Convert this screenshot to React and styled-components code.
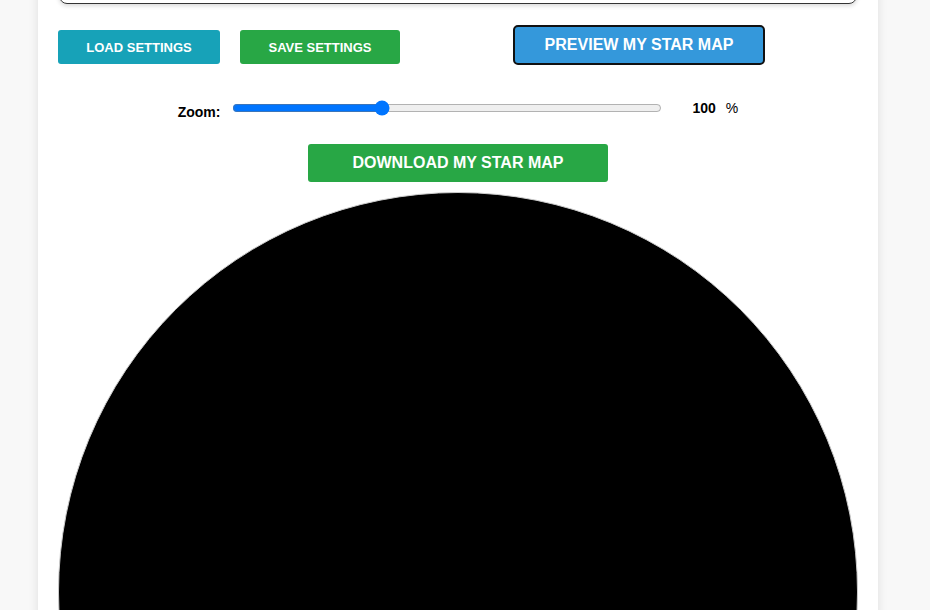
import React, { useState } from 'react';
import styled, { createGlobalStyle } from 'styled-components';

const GlobalStyle = createGlobalStyle`
  html, body {
    margin: 0;
    padding: 0;
    background: #f8f8f8;
    font-family: "Liberation Sans", Arial, sans-serif;
    overflow: hidden;
  }
`;

const Card = styled.div`
  width: 800px;
  margin-left: 38px;
  padding: 0 20px 40px;
  background: #fff;
  box-shadow: 0 0 10px rgba(0, 0, 0, 0.1);
`;

// bottom edge of the text box that sits above the fold
const TopBox = styled.div`
  margin-top: -60px;
  height: 62px;
  margin-left: 1px;
  margin-right: 1px;
  border: 1px solid #333;
  border-radius: 8px;
  box-shadow: 0 2px 4px rgba(0, 0, 0, 0.15);
`;

const ButtonRow = styled.div`
  display: flex;
  align-items: flex-start;
  margin-top: 21px;
  height: 40px;
`;

const SmallButton = styled.button`
  width: ${(p) => p.$w}px;
  height: 34px;
  margin-top: 5px;
  margin-right: 20px;
  border: none;
  border-radius: 3px;
  background: ${(p) => p.$bg};
  color: #fff;
  font-family: "Liberation Sans", Arial, sans-serif;
  font-size: 13px;
  font-weight: bold;
  text-transform: uppercase;
  cursor: pointer;
`;

const PreviewButton = styled.button`
  margin-left: 93px;
  width: 252px;
  height: 40px;
  border: 2px solid #111;
  border-radius: 5px;
  background: #3498db;
  color: #fff;
  font-family: "Liberation Sans", Arial, sans-serif;
  font-size: 16px;
  font-weight: bold;
  cursor: pointer;
`;

const ZoomRow = styled.div`
  display: flex;
  justify-content: center;
  align-items: center;
  margin-top: 33px;
  height: 20px;
`;

const ZoomLabel = styled.label`
  font-size: 14px;
  font-weight: bold;
  color: #000;
  margin-right: 12px;
  position: relative;
  top: 4px;
`;

const Slider = styled.input`
  width: 430px;
  margin: 0;
`;

const ZoomValue = styled.span`
  margin-left: 30px;
  font-size: 14px;
  font-weight: bold;
  color: #000;
`;

const Percent = styled.span`
  margin-left: 10px;
  font-size: 14px;
  color: #000;
`;

const DownloadRow = styled.div`
  display: flex;
  justify-content: center;
  margin-top: 26px;
`;

const DownloadButton = styled.button`
  width: 300px;
  height: 38px;
  border: none;
  border-radius: 3px;
  background: #28a745;
  color: #fff;
  font-family: "Liberation Sans", Arial, sans-serif;
  font-size: 16px;
  font-weight: bold;
  cursor: pointer;
`;

const MapCircle = styled.div`
  margin-top: 10px;
  width: 798px;
  height: 798px;
  border-radius: 50%;
  background: #000;
  border: 1px solid #ccc;
`;

export default function App() {
  const [zoom, setZoom] = useState(100);

  return (
    <>
      <GlobalStyle />
      <Card>
        <TopBox />
        <ButtonRow>
          <SmallButton $w={162} $bg="#17a2b8">Load Settings</SmallButton>
          <SmallButton $w={160} $bg="#28a745">Save Settings</SmallButton>
          <PreviewButton>PREVIEW MY STAR MAP</PreviewButton>
        </ButtonRow>
        <ZoomRow>
          <ZoomLabel>Zoom:</ZoomLabel>
          <Slider
            type="range"
            min={25}
            max={245}
            value={zoom}
            onChange={(e) => setZoom(Number(e.target.value))}
          />
          <ZoomValue>{zoom}</ZoomValue>
          <Percent>%</Percent>
        </ZoomRow>
        <DownloadRow>
          <DownloadButton>DOWNLOAD MY STAR MAP</DownloadButton>
        </DownloadRow>
        <MapCircle />
      </Card>
    </>
  );
}
